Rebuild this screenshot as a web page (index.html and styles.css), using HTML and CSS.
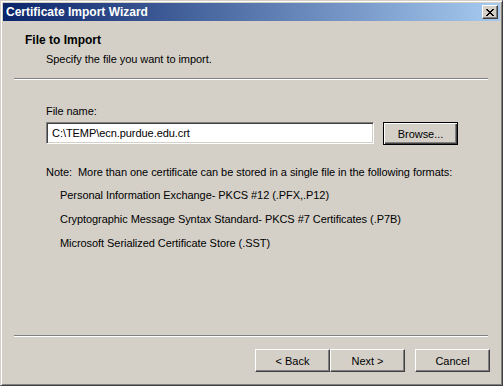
FILE: index.html
```html
<!DOCTYPE html>
<html lang="en">
<head>
    <meta charset="UTF-8">
    <title>Certificate Import Wizard</title>
    <link rel="stylesheet" href="styles.css">
</head>
<body>
    <div class="window">
        <div class="titlebar">
            <span class="title-text">Certificate Import Wizard</span>
            <div class="close-btn">
                <svg width="8" height="7" viewBox="0 0 8 7">
                    <path d="M0 0h2v1h1v1h2v-1h1v-1h2v1h-1v1h-1v1h-1v1h1v1h1v1h1v1h-2v-1h-1v-1h-2v1h-1v1h-2v-1h1v-1h1v-1h1v-1h-1v-1h-1z" fill="#000"/>
                </svg>
            </div>
        </div>
        <div class="header">
            <div class="header-title">File to Import</div>
            <div class="header-sub">Specify the file you want to import.</div>
        </div>
        <div class="separator"></div>
        <div class="content">
            <div class="label">File name:</div>
            <div class="file-row">
                <div class="textbox">C:\TEMP\ecn.purdue.edu.crt</div>
                <div class="button default">Browse...</div>
            </div>
            <div class="note">Note:&nbsp; More than one certificate can be stored in a single file in the following formats:</div>
            <ul class="formats">
                <li>Personal Information Exchange- PKCS #12 (.PFX,.P12)</li>
                <li>Cryptographic Message Syntax Standard- PKCS #7 Certificates (.P7B)</li>
                <li>Microsoft Serialized Certificate Store (.SST)</li>
            </ul>
        </div>
        <div class="separator"></div>
        <div class="footer">
            <div class="button">&lt; Back</div>
            <div class="button">Next &gt;</div>
            <div class="button cancel">Cancel</div>
        </div>
    </div>
</body>
</html>
```
FILE: styles.css
```css
body {
    margin: 0;
    padding: 0;
    background-color: #d4d0c8;
    font-family: Tahoma, "DejaVu Sans", sans-serif;
    font-size: 11px;
    color: #000;
}
.window {
    width: 503px;
    height: 386px;
    box-sizing: border-box;
    background-color: #d4d0c8;
    border-top: 1px solid #d4d0c8;
    border-left: 1px solid #d4d0c8;
    border-right: 1px solid #404040;
    border-bottom: 1px solid #404040;
    box-shadow: inset 1px 1px 0 #fff, inset -1px -1px 0 #808080;
    padding: 2px 2px 2px 2px;
    display: flex;
    flex-direction: column;
}
.titlebar {
    height: 18px;
    background: linear-gradient(to right, #0a246a, #a6caf0);
    display: flex;
    align-items: center;
    justify-content: space-between;
    padding: 0 2px 0 3px;
}
.title-text {
    color: #fff;
    font-family: "Liberation Sans", Arial, sans-serif;
    font-weight: bold;
    font-size: 12px;
}
.close-btn {
    width: 16px;
    height: 14px;
    box-sizing: border-box;
    background-color: #d4d0c8;
    border-top: 1px solid #fff;
    border-left: 1px solid #fff;
    border-right: 1px solid #404040;
    border-bottom: 1px solid #404040;
    box-shadow: inset -1px -1px 0 #808080;
    display: flex;
    align-items: center;
    justify-content: center;
}
.header {
    height: 57px;
    padding: 12px 0 0 22px;
    box-sizing: border-box;
    font-family: "Liberation Sans", Arial, sans-serif;
}
.header-title {
    font-weight: bold;
    font-size: 12px;
}
.header-sub {
    margin-top: 6px;
    padding-left: 21px;
    letter-spacing: -0.05px;
}
.separator {
    margin: 0 12px 0 11px;
    border-top: 1px solid #808080;
    border-bottom: 1px solid #fff;
}
.content {
    flex: 1;
    padding: 25px 0 0 43px;
    font-family: "Liberation Sans", Arial, sans-serif;
    letter-spacing: -0.06px;
}
.label {
    height: 14px;
}
.file-row {
    display: flex;
    gap: 9px;
    margin-top: 3px;
}
.textbox {
    width: 328px;
    height: 22px;
    box-sizing: border-box;
    background-color: #fff;
    border-top: 1px solid #808080;
    border-left: 1px solid #808080;
    border-right: 1px solid #fff;
    border-bottom: 1px solid #fff;
    box-shadow: inset 1px 1px 0 #404040, inset -1px -1px 0 #d4d0c8;
    padding: 4px 0 0 5px;
}
.button {
    width: 75px;
    height: 23px;
    box-sizing: border-box;
    background-color: #d4d0c8;
    border-top: 1px solid #fff;
    border-left: 1px solid #fff;
    border-right: 1px solid #404040;
    border-bottom: 1px solid #404040;
    box-shadow: inset -1px -1px 0 #808080;
    display: flex;
    align-items: center;
    justify-content: center;
    font-family: "Liberation Sans", Arial, sans-serif;
}
.button.default {
    border: 1px solid #000;
    box-shadow: inset 1px 1px 0 #fff, inset -1px -1px 0 #404040, inset -2px -2px 0 #808080;
}
.note {
    margin-top: 21px;
}
.formats {
    list-style: none;
    margin: 0;
    padding: 0 0 0 14px;
}
.formats li {
    margin-top: 11px;
    height: 13px;
}
.footer {
    height: 46px;
    display: flex;
    padding: 12px 0 0 252px;
    box-sizing: border-box;
}
.cancel {
    margin-left: 10px;
}
```
